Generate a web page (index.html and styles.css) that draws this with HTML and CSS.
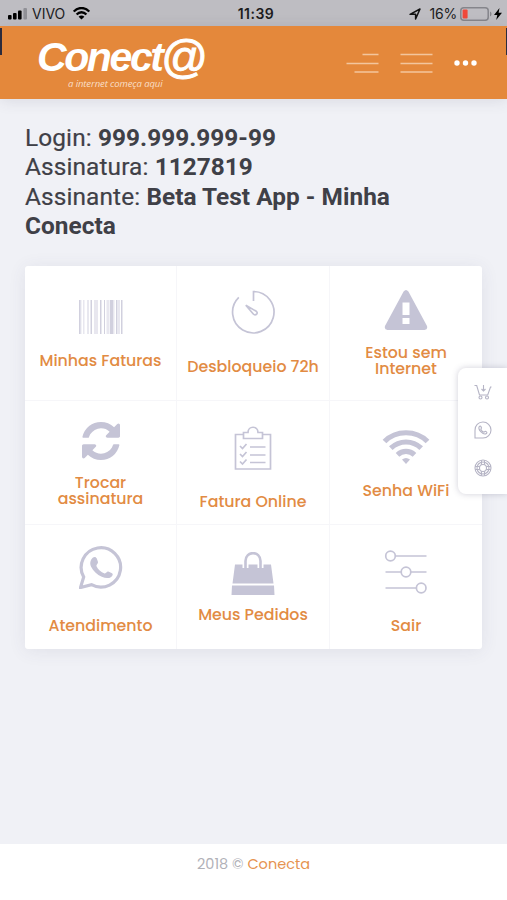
FILE: index.html
```html
<!DOCTYPE html>
<html lang="pt-BR">
<head>
    <meta charset="UTF-8">
    <meta name="viewport" content="width=device-width, initial-scale=1.0">
    <title>Minha Conecta</title>
    <link rel="stylesheet" href="styles.css">
</head>
<body>
    <div class="status-bar">
        <div class="status-left">
            <svg width="20" height="12" viewBox="0 0 20 12">
                <rect x="0" y="7" width="3.6" height="4.5" rx="1"/>
                <rect x="5" y="5" width="3.6" height="6.5" rx="1"/>
                <rect x="10" y="2.5" width="3.6" height="9" rx="1"/>
                <rect x="15.4" y="0" width="3.6" height="11.5" rx="1" fill="#909096"/>
            </svg>
            <span class="carrier">VIVO</span>
            <svg class="status-wifi" width="17" height="13" viewBox="0 0 17 13">
                <path d="M.8 4.6C5-.2 12-.2 16.2 4.6M3.6 7.5c2.8-3 7-3 9.8 0" fill="none" stroke="#000" stroke-width="2.3"/>
                <path d="M5.6 9.7c1.7-1.6 4.1-1.6 5.8 0L8.5 12.6z"/>
            </svg>
        </div>
        <strong class="clock">11:39</strong>
        <div class="status-right">
            <svg width="12" height="12" viewBox="0 0 12 12">
                <path d="M1 6.3 11 1 6.6 11V6.3z" fill="none" stroke="#111" stroke-width="1.5" stroke-linejoin="round"/>
            </svg>
            <span class="percent">16%</span>
            <svg width="33" height="14" viewBox="0 0 33 14">
                <rect x=".8" y=".8" width="27.4" height="12.4" rx="3" fill="none" stroke="#85858b" stroke-width="1.5"/>
                <rect x="2.6" y="2.6" width="5" height="8.8" rx="1" fill="#f0483a"/>
                <path d="M30 4.5c2 .7 2 4.3 0 5z" fill="#85858b"/>
            </svg>
            <svg class="bolt" width="8" height="12" viewBox="0 0 8 12"><path d="M5.5 0 0 7h3.3L2.2 12 8 4.8H4.6z"/></svg>
        </div>
    </div>

    <header class="header">
        <div class="logo">
            <div class="logo-name">Conect<span class="logo-at">@</span></div>
            <div class="logo-slogan">a internet começa aqui</div>
        </div>
        <nav class="header-nav">
            <svg width="33" height="22" viewBox="0 0 33 22" class="nav-lines">
                <path d="M16.5 2.5H32.5M.5 11.500H32.5M8.5 20H32.5"/>
            </svg>
            <svg width="33" height="22" viewBox="0 0 33 22" class="nav-lines">
                <path d="M.5 2.5H32.5M.5 11.500H32.5M.5 20H32.5"/>
            </svg>
            <svg width="24" height="6" viewBox="0 0 24 6" fill="#fff">
                <circle cx="3" cy="3" r="2.7"/><circle cx="11.5" cy="3" r="2.7"/><circle cx="20" cy="3" r="2.7"/>
            </svg>
        </nav>
    </header>

    <main class="content">
        <div class="account">
            Login: <b>999.999.999-99</b><br>
            Assinatura: <b>1127819</b><br>
            Assinante: <b>Beta Test App - Minha Conecta</b>
        </div>

        <div class="menu">
            <a class="menu-item faturas">
                <svg class="icon" viewBox="0 0 44 34" width="44" height="34">
                    <path opacity=".8" d="M0 0h1.5v34H0zM8.500 0h1v34h-1zM11.500 0h1.500v34h-1.500zM21 0h1.500v34H21zM25 0h1v34H25zM31 0h3v34h-3zM37 0h1.500v34H37zM42 0h1.500v34H42z"/>
                    <path opacity=".4" d="M1.500 0h1v34h-1zM4 0h1.500v34H4zM15 0h4v34h-4zM27.500 0h3v34h-3zM34 0h1.500v34H34zM39 0h2v34h-2z"/>
                </svg>
                <span class="label">Minhas Faturas</span>
            </a>
            <a class="menu-item desbloqueio">
                <svg class="icon line" viewBox="0 0 44 44" width="44" height="44">
                    <path d="M22.5 11V1.5A20.7 20.7 0 1 1 7.8 7.4"/>
                    <path d="M14.8 15.2 25.3 21.3c2.5 2-1 5-3 2.7z"/>
                </svg>
                <span class="label">Desbloqueio 72h</span>
            </a>
            <a class="menu-item sem-internet">
                <svg class="icon" viewBox="0 0 44 40" width="44" height="40">
                    <path fill-rule="evenodd" d="M19.6 1.5q2.4-3 4.8 0L43 36q1 3.5-2.5 4h-37Q0 39.5 1 36zM18.5 12.5v12.5h7V12.500zM18.500 28v6h7v-6z"/>
                </svg>
                <span class="label">Estou sem<br>Internet</span>
            </a>
            <a class="menu-item trocar">
                <svg class="icon" viewBox="0 0 1536 1536" width="38" height="38">
                    <path d="M1511 928q0 5-1 7-64 268-268 434.500T764 1536q-146 0-282.500-55T238 1324l-129 129q-19 19-45 19t-45-19-19-45V960q0-26 19-45t45-19h448q26 0 45 19t19 45-19 45l-137 137q71 66 161 102t187 36q134 0 250-65t186-179q11-17 53-117 8-23 30-23h192q13 0 22.500 9.500t9.500 22.500zM1536 128v448q0 26-19 45t-45 19h-448q-26 0-45-19t-19-45 19-45l138-138Q969 256 768 256q-134 0-250 65T332 500q-11 17-53 117-8 23-30 23H50q-13 0-22.500-9.500T18 608v-7q65-268 270-434.500T768 0q146 0 284 55.500T1297 212l130-129q19-19 45-19t45 19 19 45z"/>
                </svg>
                <span class="label">Trocar<br>assinatura</span>
            </a>
            <a class="menu-item online">
                <svg class="icon line" viewBox="0 0 38 44" width="38" height="44">
                    <path d="M9 8.5H1.5V43h35V8.5H29M9.5 12.5V6.5H14C14-.5 24-.5 24 6.5h4.5v6z"/>
                    <path d="m6 20 2.5 2.5L12.5 18M6 28l2.5 2.5L12.5 26M6 35.5 8.5 38l4-4.500M16 21h15.500M16 29h15.500M16 36.500h15.500"/>
                </svg>
                <span class="label">Fatura Online</span>
            </a>
            <a class="menu-item wifi">
                <svg class="icon" viewBox="0 0 48 34" width="48" height="34">
                    <g fill="none" stroke="#c5c4d6" stroke-width="5.2">
                        <path d="M2.500 11.500C14-.2 34-.2 45.500 11.500"/>
                        <path d="M8.800 18.200c8.700-8.300 21.700-8.300 30.400 0"/>
                        <path d="M15.500 24.800c4.800-4.500 12.200-4.500 17 0"/>
                    </g>
                    <path d="M20 29.600q4-3.300 8 0L24 34z"/>
                </svg>
                <span class="label">Senha WiFi</span>
            </a>
            <a class="menu-item atendimento">
                <svg class="icon" viewBox="0 0 44 44" width="44" height="44">
                    <path d="M1.500 42.500 4.700 32A19.700 19.700 0 1 1 12.500 39.700z" fill="none" stroke="#c5c4d6" stroke-width="3.200"/>
                    <path d="M14 12.500c1.500-1 3-.8 3.800 1l1.200 3.500c.4 1.500-1.800 2.800-1.600 4 1.500 3.400 4.500 6 8.200 7.400 1.500.3 2.200-2.200 3.700-1.800l3.700 1.600c1.500.8.500 2.800-.8 3.700-2.700 1.800-6 1.300-9.400-.2-4.800-2-8.700-5.700-10.700-10-1.500-3-1-6.700 1.900-9.200z"/>
                </svg>
                <span class="label">Atendimento</span>
            </a>
            <a class="menu-item pedidos">
                <svg class="icon" viewBox="0 0 44 43" width="44" height="43">
                    <path d="M4 12.500h36l2.500 19h-41zM1 33.500h42l.5 9.500H.5z"/>
                    <path d="M14.500 16V9c0-10.500 15-10.500 15 0v7" fill="none" stroke="#fff" stroke-width="6"/>
                    <path d="M14.500 16V9c0-10.500 15-10.500 15 0v7" fill="none" stroke="#c5c4d6" stroke-width="2.600"/>
                </svg>
                <span class="label">Meus Pedidos</span>
            </a>
            <a class="menu-item sair">
                <svg class="icon line" viewBox="0 0 44 44" width="44" height="44">
                    <path d="M11.500 6H42.500M1.500 22h15.500M27 22h15.500M1.500 38H32"/>
                    <circle cx="6.500" cy="6" r="4.800"/><circle cx="22" cy="22" r="4.800"/><circle cx="37.200" cy="38" r="4.800"/>
                </svg>
                <span class="label">Sair</span>
            </a>
        </div>
    </main>

    <footer class="footer">2018 © <a>Conecta</a></footer>

    <!-- Atalhos laterais -->
    <aside class="shortcuts">
        <svg width="18" height="18" viewBox="0 0 18 18">
            <path d="M.5 2.500h2.200L5.500 12h8.200L16.500 4h1M9.500 2v6M7.500 6l2 2 2-2"/>
            <circle cx="6.500" cy="14.500" r="1.500"/><circle cx="13" cy="14.500" r="1.500"/>
        </svg>
        <svg width="18" height="18" viewBox="0 0 18 18">
            <path d="M1 17V9.200A8 8 0 1 1 9 17z"/>
            <path d="M5.300 5.500c1-1 1.700-.3 2.200 1.500L6.800 8.200c.7 1.500 1.700 2.500 3.200 3l1.200-.9c1.500.5 2.300 1.200 1.200 2.200-3 2-9-4-7.100-7z"/>
        </svg>
        <svg width="18" height="18" viewBox="0 0 18 18">
            <circle cx="9" cy="9" r="8"/><circle cx="9" cy="9" r="6"/><circle cx="9" cy="9" r="3.500"/>
            <path d="M7.500 1.200v4.500M10.500 1.200v4.500M7.500 12.300v4.500M10.500 12.300v4.500M1.200 7.500h4.500M1.200 10.500h4.500M12.300 7.500h4.500M12.300 10.500h4.500"/>
        </svg>
    </aside>
    <span class="edge edge-left"></span>
    <span class="edge edge-right"></span>
</body>
</html>
```
FILE: styles.css
```css
* {
    margin: 0;
    padding: 0;
    box-sizing: border-box;
}

body {
    position: relative;
    display: flex;
    flex-direction: column;
    height: 900px;
    overflow: hidden;
    background: #f0f1f6;
    font-family: Poppins, Inter, sans-serif;
}

svg {
    display: block;
    flex-shrink: 0;
}

.status-bar {
    display: grid;
    grid-template-columns: 1fr auto 1fr;
    align-items: center;
    height: 26px;
    padding: 1px 5px 0 8px;
    background: #bebdc2;
    font-family: Inter, sans-serif;
    font-size: 14px;
    color: #1c1c1e;
}

.status-left,
.status-right {
    display: flex;
    align-items: center;
}

.status-right {
    justify-content: flex-end;
}

.carrier {
    margin-left: 4px;
}

.status-wifi {
    margin-left: 8px;
}

.clock {
    padding-left: 2px;
    font-size: 14px;
    font-weight: 600;
    letter-spacing: 0.5px;
}

.percent {
    margin: 0 3px 0 8px;
    letter-spacing: -0.2px;
}

.bolt {
    margin-left: 1px;
}

.header {
    display: flex;
    justify-content: space-between;
    height: 73px;
    padding: 0 29px 0 37px;
    background: #e4883b;
    box-shadow: 0 2px 14px rgba(60, 60, 80, 0.12);
    color: #fff;
}

.logo-name {
    height: 51px;
    font: italic bold 41px/63px "Liberation Sans", sans-serif;
    letter-spacing: -2.4px;
    white-space: nowrap;
}

.logo-at {
    position: relative;
    top: 2px;
    left: -1px;
    font-size: 46px;
    font-weight: normal;
    line-height: 1px;
    -webkit-text-stroke: 1px #fff;
}

.logo-slogan {
    padding-left: 31px;
    font: italic 9.5px/13px "Open Sans", sans-serif;
    letter-spacing: -0.1px;
    color: #f9dfc8;
}

.header-nav {
    display: flex;
    align-items: center;
    gap: 21px;
}

.nav-lines {
    stroke: #f3c59d;
    stroke-width: 1.6;
}

.content {
    flex: 1;
    padding: 24px 25px 0;
}

.account {
    font: 24.4px/29.4px Roboto, sans-serif;
    letter-spacing: 0.12px;
    color: #3f4047;
    -webkit-text-stroke: 0.2px #3f4047;
}

.account b {
    letter-spacing: 0.03px;
    -webkit-text-stroke: 0;
}

.menu {
    display: grid;
    grid-template-columns: 152px 153px 152px;
    grid-template-rows: 135px 124px 124px;
    margin-top: 25px;
    background: #fff;
    border-radius: 3px;
    box-shadow: 0 2px 18px rgba(69, 65, 100, 0.09);
}

.menu-item {
    display: flex;
    flex-direction: column;
    align-items: center;
    border-right: 1px solid #f6f6f9;
    border-bottom: 1px solid #f6f6f9;
}

.menu-item:nth-child(3n) {
    border-right: none;
}

.menu-item:nth-child(n+7) {
    border-bottom: none;
}

.icon {
    fill: #c5c4d6;
}

.line {
    fill: none;
    stroke: #c5c4d6;
    stroke-width: 1.7;
}

.label {
    margin-top: auto;
    font-size: 15.8px;
    font-weight: 500;
    line-height: 16px;
    text-align: center;
    white-space: nowrap;
    color: #e28b43;
}

.faturas { padding: 34px 0 31px; }
.desbloqueio { padding: 24px 0 25px; }
.sem-internet { padding: 24px 0 23px; }
.trocar { padding: 21px 0 17px; }
.online { padding: 25px 0 14px; }
.wifi { padding: 29px 0 25px; }
.atendimento { padding: 20px 0 15px; }
.pedidos { padding: 27px 0 26px; }
.sair { padding: 25px 0 15px; }

.footer {
    height: 56px;
    padding-top: 10px;
    background: #fff;
    font-size: 14.5px;
    line-height: 21px;
    text-align: center;
    color: #b1b1b8;
}

.footer a {
    color: #e69350;
}

.shortcuts {
    position: absolute;
    top: 368px;
    right: 0;
    display: flex;
    flex-direction: column;
    gap: 20px;
    width: 49px;
    height: 126px;
    padding: 15px 0 0 16px;
    background: #fff;
    border-radius: 8px 0 0 8px;
    box-shadow: 0 0 6px rgba(69, 65, 100, 0.25);
}

.shortcuts svg {
    fill: none;
    stroke: #b5b4c5;
    stroke-width: 1.1;
}

.edge {
    position: absolute;
    top: 28px;
    width: 2px;
    height: 27px;
    background: #2b2b3c;
}

.edge-left {
    left: 0;
}

.edge-right {
    right: 0;
    width: 1px;
}
```
